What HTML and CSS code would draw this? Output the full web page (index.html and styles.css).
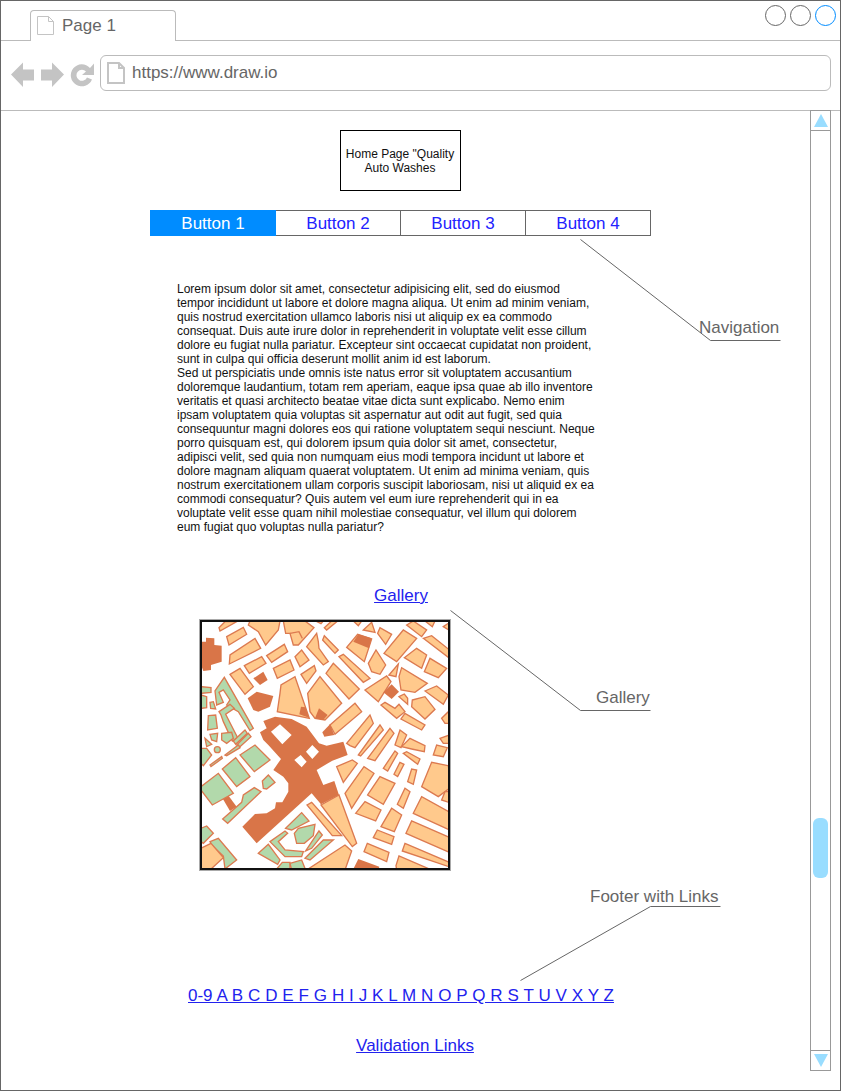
FILE: index.html
```html
<!doctype html>
<html lang="en">
<head>
<meta charset="UTF-8">
<title>Home Page wireframe</title>
<link rel="stylesheet" href="styles.css">
</head>
<body>
<div class="browser">

  <div class="tabstrip">
    <div class="tab">
      <svg class="doc-icon" width="18" height="20" viewBox="0 0 18 20">
        <path d="M.5 .5H11.5L16.5 5.500V18.500H.5Z M11.500 .5V5.500H16.500" fill="none" stroke="#c4c4c4"/>
      </svg>
      <span>Page 1</span>
    </div>
    <div class="win-buttons">
      <span class="win-btn"></span>
      <span class="win-btn"></span>
      <span class="win-btn win-btn-active"></span>
    </div>
  </div>

  <div class="addressbar">
    <svg class="nav-icons" width="84" height="26" viewBox="0 0 84 26">
      <path d="M0 12.500 12 .5V7.500H23V18.500H12V25Z" fill="#c4c4c4"/>
      <path d="M53 12.500 41 .5V7.500H30V18.500H41V25Z" fill="#c4c4c4"/>
      <path d="M79 6A11 11 0 1 0 81 17.500L76 15.500A5.500 5.500 0 1 1 75 9.500L71 13H83V1.500Z" fill="#c4c4c4"/>
    </svg>
    <div class="url">
      <svg width="18" height="22" viewBox="0 0 18 22">
        <path d="M1 1H12L17 6V21H1Z M12 1V6H17" fill="none" stroke="#c4c4c4" stroke-width="2"/>
      </svg>
      <span>https://www.draw.io</span>
    </div>
  </div>

  <div class="viewport">
    <main class="content">
      <div class="logo">Home Page "Quality Auto Washes</div>

      <nav class="buttons">
        <a class="btn btn-on">Button 1</a>
        <a class="btn">Button 2</a>
        <a class="btn">Button 3</a>
        <a class="btn">Button 4</a>
      </nav>

      <p class="copy">Lorem ipsum dolor sit amet, consectetur adipisicing elit, sed do eiusmod tempor incididunt ut labore et dolore magna aliqua. Ut enim ad minim veniam, quis nostrud exercitation ullamco laboris nisi ut aliquip ex ea commodo consequat. Duis aute irure dolor in reprehenderit in voluptate velit esse cillum dolore eu fugiat nulla pariatur. Excepteur sint occaecat cupidatat non proident, sunt in culpa qui officia deserunt mollit anim id est laborum.<br>
      Sed ut perspiciatis unde omnis iste natus error sit voluptatem accusantium doloremque laudantium, totam rem aperiam, eaque ipsa quae ab illo inventore veritatis et quasi architecto beatae vitae dicta sunt explicabo. Nemo enim ipsam voluptatem quia voluptas sit aspernatur aut odit aut fugit, sed quia consequuntur magni dolores eos qui ratione voluptatem sequi nesciunt. Neque porro quisquam est, qui dolorem ipsum quia dolor sit amet, consectetur, adipisci velit, sed quia non numquam eius modi tempora incidunt ut labore et dolore magnam aliquam quaerat voluptatem. Ut enim ad minima veniam, quis nostrum exercitationem ullam corporis suscipit laboriosam, nisi ut aliquid ex ea commodi consequatur? Quis autem vel eum iure reprehenderit qui in ea voluptate velit esse quam nihil molestiae consequatur, vel illum qui dolorem eum fugiat quo voluptas nulla pariatur?</p>

      <a class="link gallery-link" href="#">Gallery</a>

      <div class="map">
        <svg width="246" height="246" viewBox="2 2 246 246">
          <g transform="translate(-5 -5) scale(.3333)">
            <g class="o">
              <polygon points="75,48 72,38 90,20 125,20"/>
              <polygon points="95,65 145,37 155,58 102,90"/>
              <polygon points="160,30 165,18 255,18 250,45 212,90 190,50"/>
              <polygon points="265,18 330,18 357,38 310,90 295,90 285,55 272,55"/>
              <polyline points="285,55 312,50 322,70"/>
              <polygon points="388,38 410,18 428,18 395,45"/>
              <polygon points="362,18 385,18 378,26"/>
              <polygon points="475,18 500,18 490,32"/>
              <polygon points="505,45 530,22 540,52"/>
              <polygon points="548,55 555,38 590,58 572,88"/>
              <polygon points="567,115 625,45 665,70 605,140"/>
              <polygon points="635,30 655,18 695,45 680,65"/>
              <polygon points="690,18 720,18 712,35"/>
              <polygon points="685,70 710,62 770,110 770,135"/>
              <polygon points="103,147 105,120 180,70 197,100"/>
              <polygon points="148,152 200,125 213,145 163,175"/>
              <polygon points="215,122 268,88 278,110 230,142"/>
              <polygon points="235,160 285,135 297,165 247,190"/>
              <polygon points="300,125 320,105 342,135 315,155"/>
              <polygon points="335,95 365,55 370,80 372,100 400,140 385,150"/>
              <polygon points="383,75 388,62 430,105 420,115"/>
              <polygon points="318,178 358,152 363,168 335,205"/>
              <polygon points="105,178 135,160 175,215 150,238"/>
              <polygon points="247,290 255,235 258,210 300,185 343,310"/>
              <polygon points="338,235 375,185 440,265 390,315 360,310 345,290"/>
              <polygon points="393,175 415,145 493,222 462,252"/>
              <polygon points="432,125 445,118 525,190 505,202"/>
              <polygon points="455,97 488,58 530,72 508,140"/>
              <polygon points="520,145 543,105 572,150 555,178 530,170"/>
              <polygon points="582,180 610,147 603,185"/>
              <polygon points="612,185 620,158 697,205 660,232 618,225"/>
              <polygon points="510,225 575,183 588,200 550,260"/>
              <polygon points="612,245 628,237 638,250 638,268"/>
              <polygon points="558,270 570,262 600,280 612,268 630,290 605,310"/>
              <polygon points="652,255 690,245 720,283 690,312 650,275"/>
              <polygon points="618,312 630,295 690,330 680,345"/>
              <polygon points="690,228 725,213 760,240 745,268"/>
              <polygon points="688,170 705,130 755,160 730,188"/>
              <polygon points="628,128 665,100 695,120 680,160"/>
              <polygon points="740,310 770,280 770,325 750,325"/>
              <polygon points="735,370 770,358 770,385 745,385"/>
              <polygon points="745,35 770,18 770,50"/>
              <polygon points="405,330 480,265 500,290 420,358"/>
              <polygon points="455,385 525,300 535,325 480,398 465,392"/>
              <polygon points="555,330 565,345 497,423 490,420"/>
              <polygon points="585,340 597,355 540,437 518,430"/>
              <polygon points="615,345 635,360 618,398 600,390"/>
              <polygon points="645,370 690,392 688,410 650,402 620,395"/>
            </g>
            <g class="d">
              <polygon points="313,298 318,275 332,277 342,308"/>
              <polygon points="360,310 372,280 398,300 385,315"/>
              <polygon points="475,80 490,58 530,70 522,100"/>
              <polygon points="565,232 590,208 612,230 590,252"/>
              <polygon points="382,352 405,328 418,360 388,365"/>
              <polygon points="18,80 33,80 33,68 58,70 58,90 80,92 80,140 48,150 48,165 25,168 18,150"/>
              <polygon points="175,190 205,170 218,195 195,210"/>
              <polygon points="158,250 185,230 235,243 225,275 190,290 175,285"/>
              <path fill-rule="evenodd" d="M205 318 240 305 290 312 335 335 372 385 395 392 445 380 458 420 412 437 365 465 385 510 418 498 432 540 378 568 350 535 185 685 142 635 180 597 215 595 240 580 243 562 262 562 280 530 280 505 265 485 235 465 258 432 220 390 205 375 195 352 215 340Z M228 350 255 328 290 360 262 388 Z M298 435 317 420 335 440 320 457Z M333 410 352 390 372 410 352 432Z"/>
              <polygon points="78,542 95,535 125,575 105,588"/>
              <polygon points="475,762 490,732 553,755 550,770"/>
            </g>
            <g class="g">
              <polygon points="60,228 88,187 175,340 165,347 130,290 95,270 105,255 85,225 72,232 85,262 65,270"/>
              <polygon points="18,215 48,218 48,232 18,235"/>
              <polygon points="18,240 35,245 35,278 18,280"/>
              <polygon points="45,262 55,260 62,282 47,280"/>
              <polygon points="72,290 105,268 118,280 92,298 128,368 112,378 85,320 78,300"/>
              <polygon points="40,302 62,300 67,340 38,345"/>
              <polygon points="45,358 68,355 65,380 50,375"/>
              <polygon points="80,355 110,352 115,370 95,385 80,375"/>
              <polygon points="115,378 150,345 157,355 122,388"/>
              <polygon points="125,390 160,355 168,365 135,395"/>
              <polygon points="30,370 50,388 35,395"/>
              <polygon points="18,400 35,400 50,420 25,452 18,445"/>
              <circle cx="67" cy="404" r="9"/>
              <polygon points="45,450 80,425 82,430 48,455"/>
              <polygon points="90,420 130,390 135,398 95,422"/>
              <polygon points="135,420 180,390 225,435 178,470"/>
              <polygon points="82,462 122,428 165,485 125,515"/>
              <polygon points="18,515 70,475 115,535 52,570 18,525"/>
              <polygon points="202,498 220,480 240,502 215,522 205,520"/>
              <polygon points="83,612 140,562 145,540 178,518 198,530 98,625"/>
              <polygon points="272,640 320,593 342,618 290,645"/>
              <polygon points="298,655 310,640 360,628 355,662 328,685 305,685"/>
              <polygon points="332,708 372,648 382,660 350,700"/>
              <polygon points="330,730 385,675 415,675 345,735"/>
              <polygon points="190,715 220,688 255,735 248,748"/>
              <polygon points="225,680 270,648 278,655 250,680 270,705 325,710 320,725 270,725"/>
              <polygon points="245,762 262,742 285,742 285,765"/>
              <polygon points="285,745 320,735 330,760 290,765"/>
              <polygon points="18,640 35,633 55,655 25,685 18,680"/>
              <polygon points="45,680 70,670 125,735 90,762 85,723 50,690"/>
            </g>
            <g class="o">
              <polygon points="18,700 48,685 85,728 45,765 18,765"/>
              <polygon points="425,455 472,435 487,445 445,502"/>
              <polygon points="450,535 507,455 537,475 470,580"/>
              <polygon points="518,540 555,485 600,505 565,568"/>
              <polygon points="565,460 600,408 608,415 578,468"/>
              <polygon points="597,478 615,442 627,448 608,485"/>
              <polygon points="638,500 650,462 665,465 655,508"/>
              <polygon points="607,568 630,520 645,530 625,580"/>
              <polygon points="680,515 710,442 760,452 770,515 730,545"/>
              <polygon points="740,555 750,530 770,530 770,565"/>
              <polygon points="655,595 680,545 770,595 770,648"/>
              <polygon points="633,655 650,618 770,670 770,715"/>
              <polygon points="622,708 630,685 770,745 770,758"/>
              <polygon points="603,752 612,723 710,765 605,765"/>
              <polygon points="558,635 590,580 620,600 598,650"/>
              <polygon points="482,595 510,560 558,585 542,618"/>
              <polygon points="535,668 547,645 597,665 590,688"/>
              <polygon points="507,710 517,685 582,712 575,740"/>
              <polygon points="378,570 432,540 485,685 472,695"/>
              <polygon points="336,570 350,562 440,662 412,662"/>
              <polygon points="335,765 450,690 470,708 450,765"/>
              <polygon points="625,415 635,410 675,432 668,448"/>
              <polygon points="715,420 725,390 757,398 745,425"/>
            </g>
          </g>
        </svg>
      </div>

      <a class="link footer-links" href="#">0-9 A B C D E F G H I J K L M N O P Q R S T U V X Y Z</a>
      <a class="link validation-link" href="#">Validation Links</a>

      <svg class="callouts" width="809" height="979" viewBox="0 0 809 979">
        <path d="M579.500 128.500 709.500 229.500H779.500"/>
        <path d="M449.500 499.500 579.500 599.500H649.500"/>
        <path d="M519.500 869.500 649.500 795.500H719.500"/>
      </svg>
      <span class="note note-nav">Navigation</span>
      <span class="note note-gallery">Gallery</span>
      <span class="note note-footer">Footer with Links</span>
    </main>

    <div class="scrollbar">
      <div class="scroll-btn"><span class="arrow-up"></span></div>
      <div class="scroll-track"><span class="scroll-thumb"></span></div>
      <div class="scroll-btn scroll-btn-end"><span class="arrow-down"></span></div>
    </div>
  </div>

</div>
</body>
</html>
```

FILE: styles.css
```css
body {
  margin: 0;
  font-family: "Liberation Sans", Arial, sans-serif;
  background: #fff;
}
.browser {
  box-sizing: border-box;
  width: 841px;
  height: 1091px;
  border: 1px solid #666;
  overflow: hidden;
}

/* tab strip */
.tabstrip {
  box-sizing: border-box;
  height: 40px;
  border-bottom: 1px solid #bbb;
  display: flex;
  justify-content: space-between;
}
.tab {
  box-sizing: border-box;
  width: 146px;
  height: 31px;
  margin: 9px 0 0 29px;
  padding-left: 6px;
  border: 1px solid #bbb;
  border-bottom: 0;
  border-radius: 4px 4px 0 0;
  background: #fff;
  display: flex;
  align-items: center;
  gap: 7px;
  font-size: 17px;
  color: #666;
}
.win-buttons {
  display: flex;
  gap: 4px;
  margin: 4px 4px 0 0;
}
.win-btn {
  box-sizing: border-box;
  width: 21px;
  height: 21px;
  border: 1px solid #666;
  border-radius: 50%;
}
.win-btn-active {
  border-color: #008cff;
}

/* address bar */
.addressbar {
  box-sizing: border-box;
  height: 70px;
  border-bottom: 1px solid #bbb;
  padding: 14px 9px 0 10px;
  display: flex;
  align-items: flex-start;
  gap: 5px;
}
.nav-icons {
  margin-top: 7px;
}
.url {
  box-sizing: border-box;
  flex: 1;
  height: 36px;
  border: 1px solid #bbb;
  border-radius: 6px;
  padding-left: 6px;
  display: flex;
  align-items: center;
  gap: 7px;
  font-size: 17px;
  color: #666;
}

/* page area */
.viewport {
  display: flex;
  align-items: flex-start;
}
.content {
  position: relative;
  width: 809px;
  height: 979px;
  padding-top: 19px;
  box-sizing: border-box;
}
.logo {
  box-sizing: border-box;
  width: 121px;
  height: 61px;
  margin-left: 339px;
  padding: 0 5px 0 4px;
  border: 1px solid #000;
  display: flex;
  align-items: center;
  justify-content: center;
  text-align: center;
  font-size: 12px;
  line-height: 14px;
  color: #111;
}
.buttons {
  display: flex;
  width: 501px;
  height: 26px;
  margin: 19px 0 0 149px;
}
.btn {
  box-sizing: border-box;
  width: 125px;
  border: 1px solid #666;
  border-left: 0;
  font-size: 17px;
  line-height: 26px;
  text-align: center;
  color: #22f;
}
.btn-on {
  width: 126px;
  border: 0;
  background: #008cff;
  color: #fff;
  line-height: 28px;
}
.copy {
  width: 418px;
  margin: 46px 0 0 176px;
  font-size: 12px;
  line-height: 14px;
  color: #111;
}
.link {
  display: block;
  font-size: 17px;
  line-height: 18px;
  color: #22e;
  text-decoration: underline;
  text-align: center;
}
.gallery-link {
  width: 100px;
  margin: 53px 0 0 350px;
}
.map {
  box-sizing: border-box;
  width: 250px;
  height: 250px;
  margin: 15px 0 0 199px;
  border: 2px solid #111;
  box-shadow: 0 0 0 1px #aaa;
  overflow: hidden;
}
.map svg {
  display: block;
}
.o polygon, .o polyline {
  fill: #ffc98c;
  stroke: #dc7a50;
  stroke-width: 4;
}
.o polyline {
  fill: none;
}
.d polygon, .d path {
  fill: #d97548;
}
.g polygon, .g circle {
  fill: #b2d9ab;
  stroke: #dc7a50;
  stroke-width: 4;
}
.footer-links {
  width: 500px;
  margin: 117px 0 0 150px;
  word-spacing: .16px;
}
.validation-link {
  width: 200px;
  margin: 32px 0 0 314px;
}

/* annotations lying over the page */
.callouts {
  position: absolute;
  left: 0;
  top: 0;
  fill: none;
  stroke: #666;
}
.note {
  position: absolute;
  font-size: 17px;
  line-height: 18px;
  color: #666;
}
.note-nav {
  left: 698px;
  top: 208px;
}
.note-gallery {
  left: 595px;
  top: 578px;
}
.note-footer {
  left: 589px;
  top: 777px;
}

/* scrollbar */
.scrollbar {
  box-sizing: border-box;
  width: 21px;
  height: 961px;
  margin-top: -1px;
  border: 1px solid #999;
  display: flex;
  flex-direction: column;
  background: #fff;
}
.scroll-btn {
  height: 20px;
  border-bottom: 1px solid #999;
  box-sizing: border-box;
  display: flex;
  align-items: center;
  justify-content: center;
}
.scroll-btn-end {
  border-bottom: 0;
  border-top: 1px solid #999;
}
.arrow-up, .arrow-down {
  width: 0;
  height: 0;
  border-left: 7px solid transparent;
  border-right: 7px solid transparent;
}
.arrow-up {
  border-bottom: 13px solid #9df;
}
.arrow-down {
  border-top: 13px solid #9df;
}
.scroll-track {
  flex: 1;
  padding: 687px 2px 0;
}
.scroll-thumb {
  display: block;
  height: 60px;
  border-radius: 6px;
  background: #9df;
}
```
